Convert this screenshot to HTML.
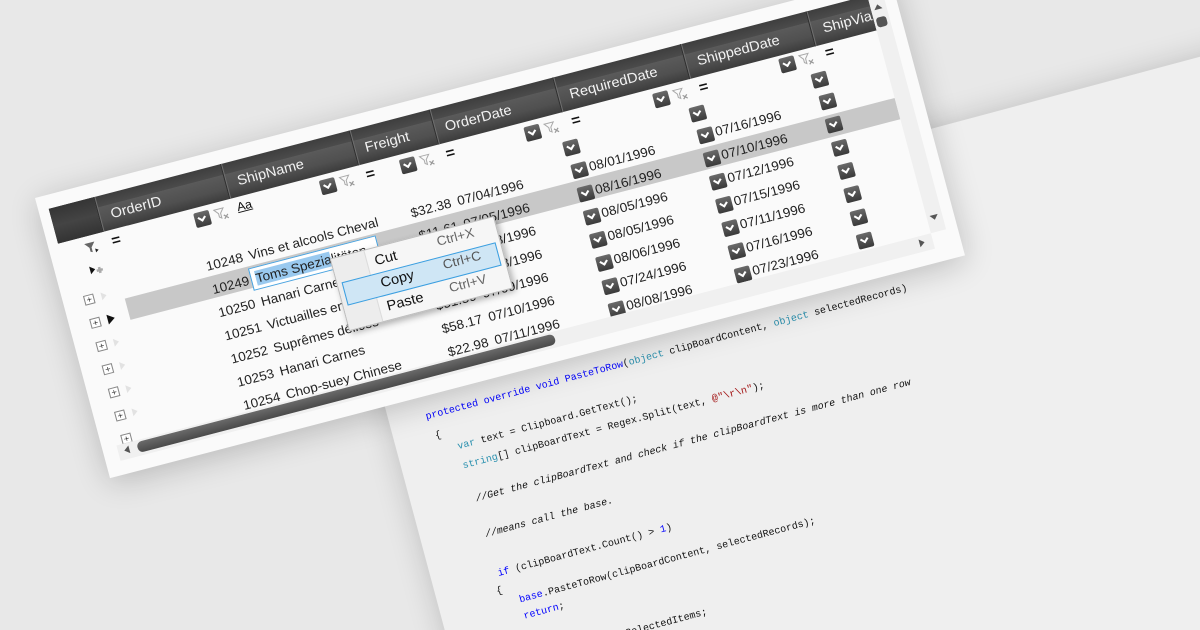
<!DOCTYPE html>
<html style="overflow:hidden;width:1200px;height:630px"><head><meta charset="utf-8">
<style>
html,body{margin:0;padding:0}
body{width:1200px;height:630px;overflow:hidden;background:#e8e8e8;position:relative;font-family:"Liberation Sans",sans-serif}
.wrap{position:absolute;left:0;top:0;width:1200px;height:630px;overflow:hidden}
.code{position:absolute;left:352px;top:284px;width:1100px;height:700px;background:#efefef;transform-origin:0 0;transform:rotate(-15deg);box-shadow:0 0 30px rgba(0,0,0,0.18)}
.code div{position:absolute;white-space:pre;font-family:"Liberation Mono",monospace;font-size:10px;color:#111;line-height:12px}
.k{color:#0000ff}.t{color:#2b91af}.c{color:#008000;font-style:italic}.s{color:#a31515}
.card{position:absolute;left:35px;top:198px;width:844px;height:290px;background:#fafafa;transform-origin:0 0;transform:matrix(1.013,-0.264,0.2586,0.966,0,0);box-shadow:0 6px 30px rgba(0,0,0,0.2);overflow:hidden}
.in{position:absolute;left:0;top:0;width:844px;height:290px}
.a{position:absolute;white-space:nowrap}
.hdr{position:absolute;left:10px;top:14px;width:808px;height:36px;background:linear-gradient(#3e3e3e 0,#4b4b4b 30%,#5a5a5a 31%,#505050 70%,#3c3c3c 100%)}
.sep{position:absolute;top:14px;width:1px;height:36px;background:#6f6f6f;border-left:1px solid #2e2e2e}
.hl{position:absolute;top:26px;color:#f2f2f2;font-size:14px}
.cell{position:absolute;font-size:13px;color:#222;line-height:18px;white-space:nowrap}
.dd{position:absolute;width:15px;height:15px;border-radius:2px;background:linear-gradient(#6a6a6a,#3a3a3a)}
.dd:after{content:"";position:absolute;left:4px;top:3px;width:4px;height:4px;border-right:2px solid #fff;border-bottom:2px solid #fff;transform:rotate(45deg)}
.eq{position:absolute;font-size:15px;font-weight:bold;color:#111;line-height:14px}
.fx{position:absolute;width:14px;height:14px}
.pb{position:absolute;width:8px;height:8px;border:1px solid #888;background:#fff;font-size:9px;line-height:8px;text-align:center;color:#333}
.tri{position:absolute;width:0;height:0;border-top:4px solid transparent;border-bottom:4px solid transparent;border-left:5px solid #e2e2e2}
.menu{position:absolute;left:257px;top:133px;width:160px;height:73px;background:#f6f6f6;border:1px solid #bdbdbd;box-shadow:2px 3px 6px rgba(0,0,0,0.3)}
</style></head><body>
<div class="wrap">
<div class="code">
<div style="left:37px;top:143px"><span class="k">protected override void</span> <span class="k">PasteToRow</span>(<span class="t">object</span> clipBoardContent, <span class="t">object</span> selectedRecords)</div>
<div style="left:41px;top:164px">{</div>
<div style="left:60px;top:180px"><span class="t">var</span> text = Clipboard.GetText();</div>
<div style="left:60px;top:200px"><span class="t">string</span>[] clipBoardText = Regex.Split(text, <span class="s">@"\r\n"</span>);</div>
<div style="left:64px;top:235px" class="c">//Get the clipBoardText and check if the clipBoardText is more than one row</div>
<div style="left:64px;top:272px" class="c">//means call the base.</div>
<div style="left:66px;top:313px"><span class="k">if</span> (clipBoardText.Count() &gt; <span class="k">1</span>)</div>
<div style="left:60px;top:330px">{</div>
<div style="left:80px;top:344px"><span class="k">base</span>.PasteToRow(clipBoardContent, selectedRecords);</div>
<div style="left:80px;top:361px"><span class="k">return</span>;</div>
<div style="left:60px;top:384px">}</div>
<div style="left:60px;top:404px"><span class="t">var</span> records = <span class="k">this</span>.SelectedItems;</div>
</div>

<div class="card"><div class="in">
<div class="hdr"></div>
<div class="a" style="left:10px;top:14px;width:44px;height:36px;background:linear-gradient(#353535,#444 50%,#333)"></div>
<div class="sep" style="left:54px"></div><div class="sep" style="left:179px"></div><div class="sep" style="left:306px"></div><div class="sep" style="left:385px"></div><div class="sep" style="left:507px"></div><div class="sep" style="left:633px"></div><div class="sep" style="left:757px"></div>
<div class="hl" style="left:66px">OrderID</div>
<div class="hl" style="left:191px">ShipName</div>
<div class="hl" style="left:317px">Freight</div>
<div class="hl" style="left:396px">OrderDate</div>
<div class="hl" style="left:519px">RequiredDate</div>
<div class="hl" style="left:645px">ShippedDate</div>
<div class="hl" style="left:769px">ShipVia</div>

<svg class="fx" style="left:33px;top:55px" viewBox="0 0 14 14"><path d="M1 2h10L7 7v5L5 11V7z" fill="#666"/><path d="M10 9l3 2-3 2z" fill="#222"/></svg>
<div class="eq" style="left:60px;top:55px">=</div>
<div class="dd" style="left:142px;top:55px"></div>
<svg class="fx" style="left:161px;top:55px" viewBox="0 0 14 14"><path d="M1 2h9L6.5 6.5v5L4.5 10V6.5z" fill="none" stroke="#aaa"/><path d="M9 9l4 4M13 9l-4 4" stroke="#999" stroke-width="1.2"/></svg>
<div class="a" style="left:184px;top:53px;font-size:12px;text-decoration:underline;color:#111">Aa</div>
<div class="dd" style="left:266px;top:55px"></div>
<svg class="fx" style="left:285px;top:55px" viewBox="0 0 14 14"><path d="M1 2h9L6.5 6.5v5L4.5 10V6.5z" fill="none" stroke="#aaa"/><path d="M9 9l4 4M13 9l-4 4" stroke="#999" stroke-width="1.2"/></svg>
<div class="eq" style="left:311px;top:55px">=</div>
<div class="dd" style="left:345px;top:55px"></div>
<svg class="fx" style="left:364px;top:55px" viewBox="0 0 14 14"><path d="M1 2h9L6.5 6.5v5L4.5 10V6.5z" fill="none" stroke="#aaa"/><path d="M9 9l4 4M13 9l-4 4" stroke="#999" stroke-width="1.2"/></svg>
<div class="eq" style="left:390px;top:55px">=</div>
<div class="dd" style="left:468px;top:55px"></div>
<svg class="fx" style="left:487px;top:55px" viewBox="0 0 14 14"><path d="M1 2h9L6.5 6.5v5L4.5 10V6.5z" fill="none" stroke="#aaa"/><path d="M9 9l4 4M13 9l-4 4" stroke="#999" stroke-width="1.2"/></svg>
<div class="eq" style="left:514px;top:55px">=</div>
<div class="dd" style="left:595px;top:55px"></div>
<svg class="fx" style="left:614px;top:55px" viewBox="0 0 14 14"><path d="M1 2h9L6.5 6.5v5L4.5 10V6.5z" fill="none" stroke="#aaa"/><path d="M9 9l4 4M13 9l-4 4" stroke="#999" stroke-width="1.2"/></svg>
<div class="eq" style="left:640px;top:55px">=</div>
<div class="dd" style="left:720px;top:53px"></div>
<svg class="fx" style="left:739px;top:53px" viewBox="0 0 14 14"><path d="M1 2h9L6.5 6.5v5L4.5 10V6.5z" fill="none" stroke="#aaa"/><path d="M9 9l4 4M13 9l-4 4" stroke="#999" stroke-width="1.2"/></svg>
<div class="eq" style="left:765px;top:53px">=</div>

<svg class="fx" style="left:32px;top:79px" viewBox="0 0 14 14"><path d="M1 1l5 4-5 4z" fill="#111"/><path d="M7 7h6M10 4v6" stroke="#aaa" stroke-width="2.5"/></svg>
<div class="dd" style="left:500px;top:79px"></div>
<div class="dd" style="left:625px;top:78px"></div>
<div class="dd" style="left:746px;top:76px"></div>

<div class="a" style="left:58px;top:120px;width:760px;height:22px;background:#c8c8c8"></div>

<div class="pb" style="left:20px;top:107px">+</div><div class="tri" style="left:37px;top:108px"></div>
<div class="pb" style="left:20px;top:131px">+</div><div class="tri" style="left:37px;top:131px;border-left-color:#111;border-width:5px 0 5px 7px"></div>
<div class="pb" style="left:20px;top:155px">+</div><div class="tri" style="left:37px;top:156px"></div>
<div class="pb" style="left:20px;top:179px">+</div><div class="tri" style="left:37px;top:180px"></div>
<div class="pb" style="left:20px;top:203px">+</div><div class="tri" style="left:37px;top:204px"></div>
<div class="pb" style="left:20px;top:227px">+</div><div class="tri" style="left:37px;top:228px"></div>
<div class="pb" style="left:20px;top:251px">+</div>

<div class="cell" style="left:141px;top:101px">10248</div><div class="cell" style="left:183px;top:101px">Vins et alcools Cheval</div><div class="cell" style="left:343px;top:101px">$32.38</div><div class="cell" style="left:389px;top:101px">07/04/1996</div><div class="dd" style="left:502px;top:103px"></div><div class="cell" style="left:519px;top:101px">08/01/1996</div><div class="dd" style="left:627px;top:101px"></div><div class="cell" style="left:644px;top:99px">07/16/1996</div><div class="dd" style="left:748px;top:99px"></div>
<div class="cell" style="left:141px;top:125px">10249</div><div class="a" style="left:179px;top:122px;width:124px;height:21px;border:1px solid #4aa3df;background:#fff"></div><div class="cell" style="left:184px;top:125px"><span style="background:#99c9ef">Toms Spezia</span>litäten</div><div class="cell" style="left:345px;top:125px">$11.61</div><div class="cell" style="left:389px;top:125px">07/05/1996</div><div class="dd" style="left:502px;top:127px"></div><div class="cell" style="left:519px;top:125px">08/16/1996</div><div class="dd" style="left:627px;top:125px"></div><div class="cell" style="left:644px;top:123px">07/10/1996</div><div class="dd" style="left:748px;top:123px"></div>
<div class="cell" style="left:141px;top:149px">10250</div><div class="cell" style="left:183px;top:149px">Hanari Carnes</div><div class="cell" style="left:343px;top:149px">$65.83</div><div class="cell" style="left:389px;top:149px">07/08/1996</div><div class="dd" style="left:502px;top:151px"></div><div class="cell" style="left:519px;top:149px">08/05/1996</div><div class="dd" style="left:627px;top:149px"></div><div class="cell" style="left:644px;top:147px">07/12/1996</div><div class="dd" style="left:748px;top:147px"></div>
<div class="cell" style="left:141px;top:173px">10251</div><div class="cell" style="left:183px;top:173px">Victuailles en stock</div><div class="cell" style="left:343px;top:173px">$41.34</div><div class="cell" style="left:389px;top:173px">07/08/1996</div><div class="dd" style="left:502px;top:175px"></div><div class="cell" style="left:519px;top:173px">08/05/1996</div><div class="dd" style="left:627px;top:173px"></div><div class="cell" style="left:644px;top:171px">07/15/1996</div><div class="dd" style="left:748px;top:171px"></div>
<div class="cell" style="left:141px;top:197px">10252</div><div class="cell" style="left:183px;top:197px">Suprêmes délices</div><div class="cell" style="left:343px;top:197px">$51.30</div><div class="cell" style="left:389px;top:197px">07/09/1996</div><div class="dd" style="left:502px;top:199px"></div><div class="cell" style="left:519px;top:197px">08/06/1996</div><div class="dd" style="left:627px;top:197px"></div><div class="cell" style="left:644px;top:195px">07/11/1996</div><div class="dd" style="left:748px;top:195px"></div>
<div class="cell" style="left:141px;top:221px">10253</div><div class="cell" style="left:183px;top:221px">Hanari Carnes</div><div class="cell" style="left:343px;top:221px">$58.17</div><div class="cell" style="left:389px;top:221px">07/10/1996</div><div class="dd" style="left:502px;top:223px"></div><div class="cell" style="left:519px;top:221px">07/24/1996</div><div class="dd" style="left:627px;top:221px"></div><div class="cell" style="left:644px;top:219px">07/16/1996</div><div class="dd" style="left:748px;top:219px"></div>
<div class="cell" style="left:141px;top:245px">10254</div><div class="cell" style="left:183px;top:245px">Chop-suey Chinese</div><div class="cell" style="left:343px;top:245px">$22.98</div><div class="cell" style="left:389px;top:245px">07/11/1996</div><div class="dd" style="left:502px;top:247px"></div><div class="cell" style="left:519px;top:245px">08/08/1996</div><div class="dd" style="left:627px;top:245px"></div><div class="cell" style="left:644px;top:243px">07/23/1996</div><div class="dd" style="left:748px;top:243px"></div>

<div class="menu">
<div class="a" style="left:0;top:0;width:32px;height:73px;background:#ededed;border-right:1px solid #dcdcdc"></div>
<div class="a" style="left:40px;top:4px;font-size:14px;color:#111">Cut</div><div class="a" style="left:102px;top:2px;font-size:13px;color:#666">Ctrl+X</div>
<div class="a" style="left:4px;top:25px;width:150px;height:22px;background:#cfe6f5;border:1px solid #3c9fe0"></div>
<div class="a" style="left:40px;top:27px;font-size:14px;color:#111">Copy</div><div class="a" style="left:102px;top:26px;font-size:13px;color:#555">Ctrl+C</div>
<div class="a" style="left:40px;top:51px;font-size:14px;color:#111">Paste</div><div class="a" style="left:102px;top:50px;font-size:13px;color:#666">Ctrl+V</div>
</div>

<div class="a" style="left:14px;top:260px;width:804px;height:16px;background:#f0f0f0"></div>
<div class="a" style="left:33px;top:262px;width:412px;height:11px;border-radius:5px;background:linear-gradient(#6a6a6a,#4a4a4a)"></div>
<div class="a" style="left:20px;top:263px;border-top:4px solid transparent;border-bottom:4px solid transparent;border-right:5px solid #555"></div>
<div class="a" style="left:805px;top:263px;border-top:4px solid transparent;border-bottom:4px solid transparent;border-left:5px solid #555"></div>
<div class="a" style="left:818px;top:14px;width:15px;height:246px;background:#f0f0f0"></div>
<div class="a" style="left:821px;top:25px;border-left:4px solid transparent;border-right:4px solid transparent;border-bottom:5px solid #555"></div>
<div class="a" style="left:820px;top:38px;width:10px;height:10px;border-radius:3px;background:#555"></div>
<div class="a" style="left:821px;top:243px;border-left:4px solid transparent;border-right:4px solid transparent;border-top:5px solid #555"></div>
</div></div>
</div>
</body></html>
